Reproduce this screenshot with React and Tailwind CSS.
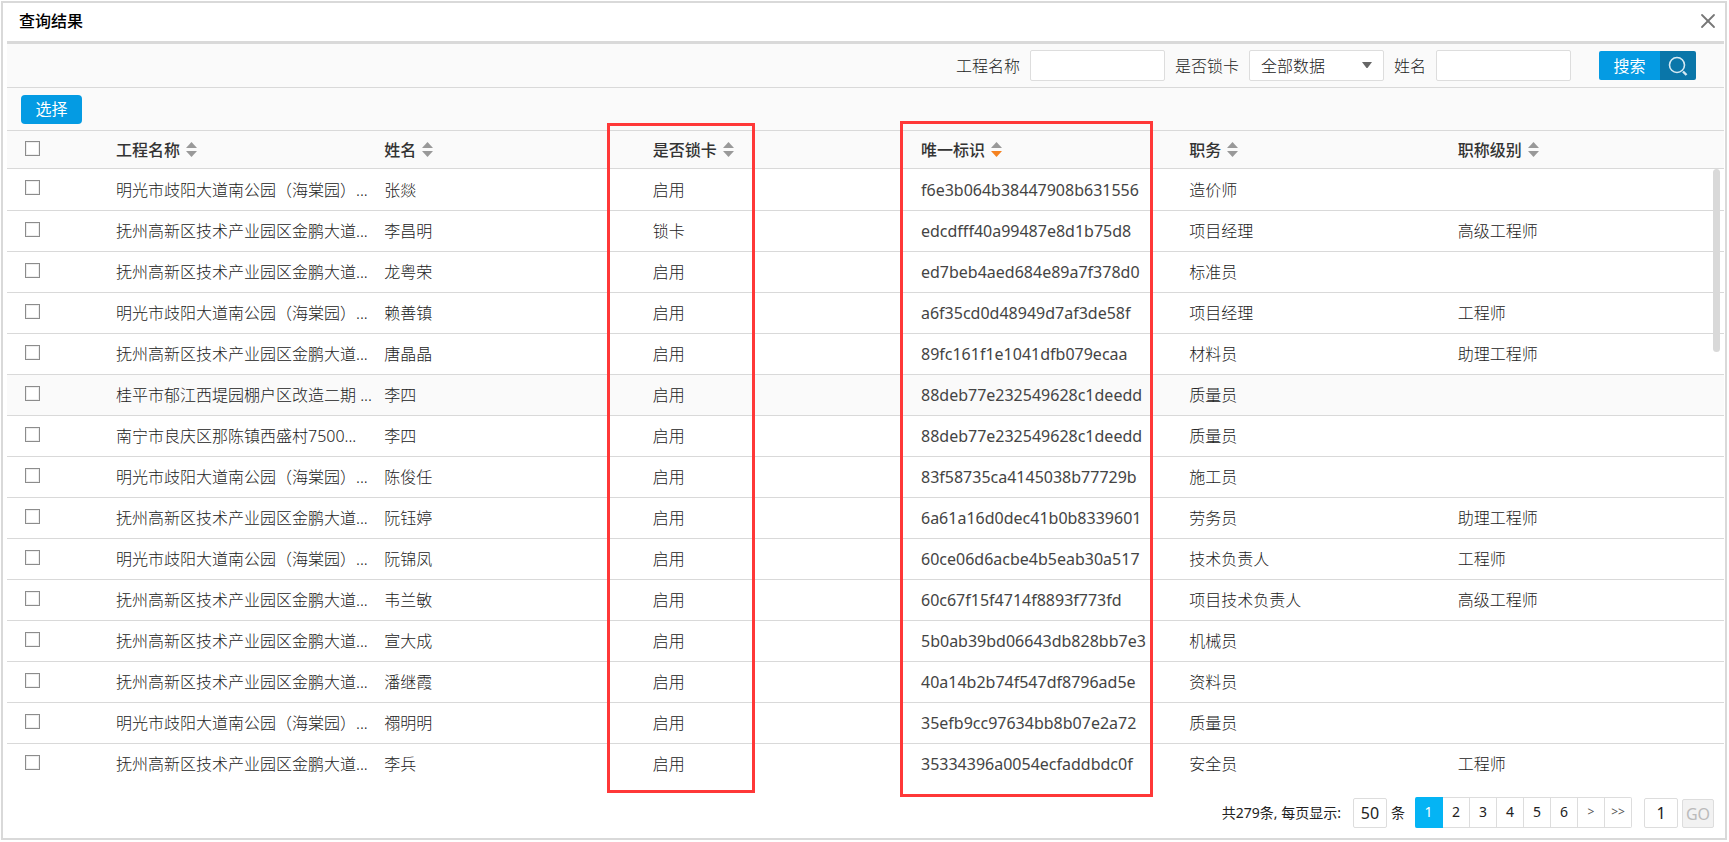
import { X } from 'lucide-react';

const COLUMNS = [
  { key: 'project', label: '工程名称' },
  { key: 'name', label: '姓名' },
  { key: 'locked', label: '是否锁卡' },
  { key: 'uid', label: '唯一标识', sorted: 'desc' },
  { key: 'duty', label: '职务' },
  { key: 'level', label: '职称级别' },
];

const MINGGUANG = '明光市歧阳大道南公园（海棠园）...';
const FUZHOU = '抚州高新区技术产业园区金鹏大道...';

const ROWS = [
  { project: MINGGUANG, name: '张燚', locked: '启用', uid: 'f6e3b064b38447908b631556', duty: '造价师', level: '' },
  { project: FUZHOU, name: '李昌明', locked: '锁卡', uid: 'edcdfff40a99487e8d1b75d8', duty: '项目经理', level: '高级工程师' },
  { project: FUZHOU, name: '龙粤荣', locked: '启用', uid: 'ed7beb4aed684e89a7f378d0', duty: '标准员', level: '' },
  { project: MINGGUANG, name: '赖善镇', locked: '启用', uid: 'a6f35cd0d48949d7af3de58f', duty: '项目经理', level: '工程师' },
  { project: FUZHOU, name: '唐晶晶', locked: '启用', uid: '89fc161f1e1041dfb079ecaa', duty: '材料员', level: '助理工程师' },
  { project: '桂平市郁江西堤园棚户区改造二期 ...', name: '李四', locked: '启用', uid: '88deb77e232549628c1deedd', duty: '质量员', level: '', hovered: true },
  { project: '南宁市良庆区那陈镇西盛村7500...', name: '李四', locked: '启用', uid: '88deb77e232549628c1deedd', duty: '质量员', level: '' },
  { project: MINGGUANG, name: '陈俊任', locked: '启用', uid: '83f58735ca4145038b77729b', duty: '施工员', level: '' },
  { project: FUZHOU, name: '阮钰婷', locked: '启用', uid: '6a61a16d0dec41b0b8339601', duty: '劳务员', level: '助理工程师' },
  { project: MINGGUANG, name: '阮锦凤', locked: '启用', uid: '60ce06d6acbe4b5eab30a517', duty: '技术负责人', level: '工程师' },
  { project: FUZHOU, name: '韦兰敏', locked: '启用', uid: '60c67f15f4714f8893f773fd', duty: '项目技术负责人', level: '高级工程师' },
  { project: FUZHOU, name: '宣大成', locked: '启用', uid: '5b0ab39bd06643db828bb7e3', duty: '机械员', level: '' },
  { project: FUZHOU, name: '潘继霞', locked: '启用', uid: '40a14b2b74f547df8796ad5e', duty: '资料员', level: '' },
  { project: MINGGUANG, name: '禤明明', locked: '启用', uid: '35efb9cc97634bb8b07e2a72', duty: '质量员', level: '' },
  { project: FUZHOU, name: '李兵', locked: '启用', uid: '35334396a0054ecfaddbdc0f', duty: '安全员', level: '工程师' },
];

const PAGES = ['1', '2', '3', '4', '5', '6', '>', '>>'];

function SortIcon({ sorted }) {
  return (
    <svg width="11" height="15" viewBox="0 0 11 15" className="shrink-0" aria-hidden="true">
      <path d="M5.5 0 L11 6 H0 Z" fill="#999" />
      <path d="M0 9 H11 L5.5 15 Z" fill={sorted === 'desc' ? '#f58220' : '#999'} />
    </svg>
  );
}

function Checkbox({ label }) {
  return (
    <input
      type="checkbox"
      aria-label={label}
      className="block size-[15px] appearance-none border border-[#8c8c8c] bg-white shadow-[inset_0_0_0_1px_#eee] checked:bg-[#049be3]"
    />
  );
}

function SearchBar() {
  const field = 'h-[31px] w-[135px] rounded-xs border border-[#ddd] bg-white';
  return (
    <form
      className="flex h-11 items-center justify-end border-b border-[#d9d9d9] bg-[#fafafa] pr-7 font-light text-[#222]"
      onSubmit={(e) => e.preventDefault()}
    >
      <label htmlFor="project">工程名称</label>
      <input id="project" type="text" className={`${field} mr-2.5 ml-2.5 px-2`} />
      <label htmlFor="locked">是否锁卡</label>
      <div className="relative mr-2.5 ml-2.5">
        <select id="locked" className={`${field} block appearance-none pl-[11px]`}>
          <option>全部数据</option>
        </select>
        <svg width="10" height="6" viewBox="0 0 10 6" className="pointer-events-none absolute top-3 right-3" aria-hidden="true">
          <path d="M0 0 H10 L5.5 6 H4.5 Z" fill="#666" />
        </svg>
      </div>
      <label htmlFor="name">姓名</label>
      <input id="name" type="text" className={`${field} ml-2.5 px-2`} />
      <button type="submit" className="ml-7 flex h-[29px] overflow-hidden rounded-xs font-normal text-white">
        <span className="flex h-full w-[61px] items-center justify-center bg-[#049be3]">搜索</span>
        <span className="flex h-full w-9 items-center justify-center bg-[#0a76a9]">
          <svg width="20" height="20" viewBox="0 0 20 20" fill="none" stroke="#d5e9f3" strokeWidth="1.6" aria-hidden="true">
            <circle cx="9" cy="9" r="7.5" />
            <path d="M15 15.5 L18.5 19" strokeWidth="2.4" />
          </svg>
        </span>
      </button>
    </form>
  );
}

function ResultTable() {
  return (
    <table className="w-full table-fixed border-separate border-spacing-0 text-left text-[#222]">
      <thead>
        <tr className="h-[38px] bg-[#fafafa]">
          <th className="w-[107px] border-b border-[#d9d9d9] p-0 pb-0.5 pl-[18px]">
            <Checkbox label="全选" />
          </th>
          {COLUMNS.map((col) => (
            <th key={col.key} className="border-b border-[#d9d9d9] p-0 pl-0.5 font-medium text-[#333]">
              <button type="button" className="flex items-center gap-1.5">
                {col.label}
                <SortIcon sorted={col.sorted} />
              </button>
            </th>
          ))}
        </tr>
      </thead>
      <tbody className="[&>tr:last-child>td]:border-transparent">
        {ROWS.map((row, i) => (
          <tr
            key={row.uid + i}
            className={`h-[41px] first:h-[42px] hover:bg-[#fafafa] ${row.hovered ? 'bg-[#fafafa]' : ''}`}
          >
            <td className="border-b border-[#d9d9d9] p-0 pb-1 pl-[18px]">
              <Checkbox label={row.name} />
            </td>
            {COLUMNS.map((col) => (
              <td
                key={col.key}
                className={`border-b border-[#d9d9d9] p-0 pl-0.5 whitespace-nowrap ${
                  col.key === 'uid' ? 'font-normal text-[#444]' : 'font-light'
                }`}
              >
                {row[col.key]}
              </td>
            ))}
          </tr>
        ))}
      </tbody>
    </table>
  );
}

function Pagination() {
  return (
    <footer className="flex items-center justify-end pt-3 pr-2.5 pb-2.5 text-sm text-[#222]">
      <label htmlFor="pageSize">共279条, 每页显示:</label>
      <input
        id="pageSize"
        type="text"
        defaultValue="50"
        className="ml-3 h-[30px] w-[34px] rounded-xs border border-[#ddd] text-center text-base"
      />
      <span className="ml-1">条</span>
      <nav className="ml-2.5 flex">
        {PAGES.map((page) => (
          <button
            key={page}
            type="button"
            className={`h-[31px] border-y border-r pb-0.5 first:rounded-l-xs last:rounded-r-xs ${
              page === '1' ? 'w-7 border-[#04b4f4] bg-[#04b4f4] text-white' : 'w-[27px] border-[#ddd] bg-white'
            } ${page.startsWith('>') ? 'text-xs text-[#555]' : ''}`}
          >
            {page}
          </button>
        ))}
      </nav>
      <input
        type="text"
        aria-label="页码"
        defaultValue="1"
        className="ml-3 h-[30px] w-[34px] rounded-xs border border-[#ddd] text-center text-base"
      />
      <button
        type="button"
        disabled
        className="ml-1 h-[29px] w-8 self-end rounded-xs border border-[#ddd] bg-[#f2f2f2] text-base text-[#bbb]"
      >
        GO
      </button>
    </footer>
  );
}

export default function App() {
  return (
    <div className="bg-white pt-px pr-0.5 pb-0.5 pl-px font-['Noto_Sans','Noto_Sans_CJK_SC',sans-serif] text-base">
      <div className="relative border-2 border-[#d9d9d9] pr-px pl-1">
        <header className="flex h-[41px] items-center justify-between border-b-3 border-[#d9d9d9] pr-1 pb-0.5 pl-3">
          <h1 className="font-medium text-black">查询结果</h1>
          <button type="button" aria-label="关闭">
            <X size={24} strokeWidth={1.8} color="#777" />
          </button>
        </header>
        <SearchBar />
        <div className="flex h-[43px] items-center border-b border-[#d9d9d9] bg-[#fafafa] pl-3.5">
          <button type="button" className="h-[29px] w-[61px] rounded-sm bg-[#049be3] text-white">
            选择
          </button>
        </div>
        <div className="relative">
          <ResultTable />
          {/* Scrollbar thumb */}
          <div className="absolute top-[38px] right-1 h-[183px] w-[7px] rounded-sm bg-[#d9d9d9]" />
        </div>
        <Pagination />
        {/* Highlight frames over the two key columns */}
        <div className="pointer-events-none absolute top-[120px] bottom-[45px] left-[604px] w-[148px] border-3 border-[#ff3838]" />
        <div className="pointer-events-none absolute top-[118px] bottom-[41px] left-[897px] w-[253px] border-3 border-[#ff3838]" />
      </div>
    </div>
  );
}
